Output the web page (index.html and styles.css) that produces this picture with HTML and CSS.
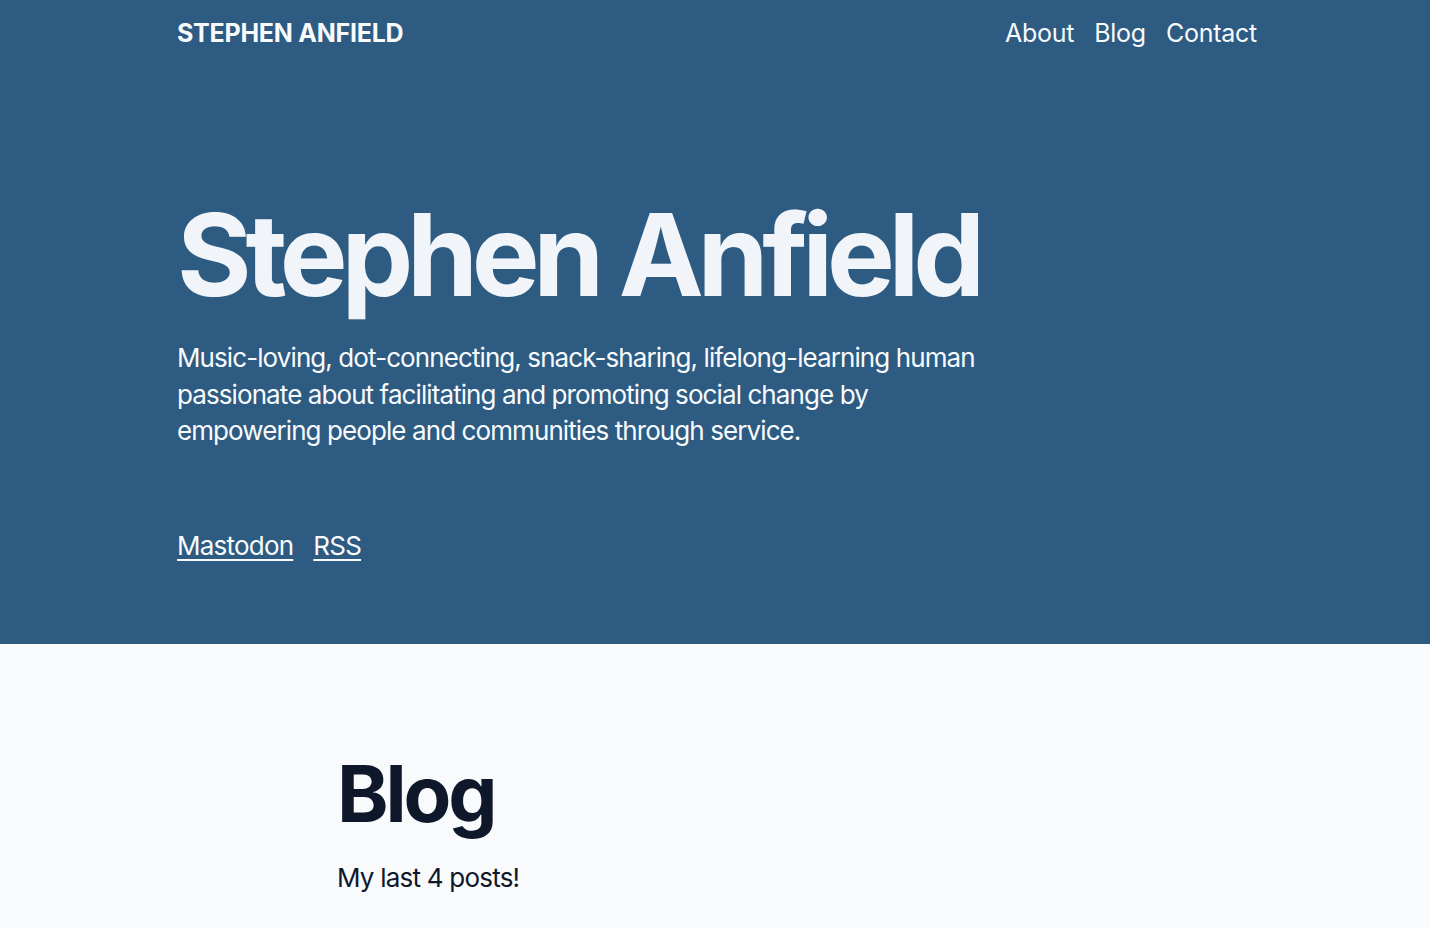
FILE: index.html
```html
<!DOCTYPE html>
<html lang="en">
<head>
<meta charset="utf-8">
<title>Stephen Anfield</title>
<link rel="stylesheet" href="styles.css">
</head>
<body>
<section class="hero">
  <div class="container">
    <header class="site-header">
      <a class="logo" href="#">STEPHEN ANFIELD</a>
      <nav class="nav">
        <a href="#">About</a>
        <a href="#">Blog</a>
        <a href="#">Contact</a>
      </nav>
    </header>
    <div class="intro">
      <h1 class="hero-title">Stephen Anfield</h1>
      <p class="hero-text">Music-loving, dot-connecting, snack-sharing, lifelong-learning human passionate about facilitating and promoting social change by empowering people and communities through service.</p>
      <div class="social">
        <a href="#">Mastodon</a>
        <a href="#">RSS</a>
      </div>
    </div>
  </div>
</section>
<main class="blog">
  <div class="blog-inner">
    <h2 class="blog-title">Blog</h2>
    <p class="blog-sub">My last 4 posts!</p>
  </div>
</main>
</body>
</html>
```

FILE: styles.css
```css
* { box-sizing: border-box; }
html, body { margin: 0; padding: 0; }
body {
  font-family: Inter, "Noto Sans", sans-serif;
  background: #f8fafc;
  color: #0f172a;
}
a { color: inherit; }
.hero {
  background: #2d5b82;
  color: #f8fafc;
  height: 644px;
}
.container {
  max-width: 1084px;
  margin: 0 auto;
  padding-left: 4px;
}
.site-header {
  display: flex;
  justify-content: space-between;
  align-items: center;
  padding-top: 14px;
  height: 51px;
}
.logo {
  font-size: 25px;
  font-weight: 700;
  letter-spacing: -0.01em;
  text-decoration: none;
  line-height: 36px;
}
.nav {
  display: flex;
  gap: 20px;
  font-size: 25px;
  letter-spacing: -0.01em;
  line-height: 36px;
}
.nav a { text-decoration: none; }
.intro { padding-top: 147px; }
.hero-title {
  margin: 0;
  font-size: 114px;
  font-weight: 700;
  letter-spacing: -0.055em;
  line-height: 1;
  color: #f1f5f9;
}
.hero-text {
  margin: 28px 0 0;
  max-width: 810px;
  font-size: 26px;
  letter-spacing: -0.035em;
  line-height: 36.5px;
}
.social {
  display: flex;
  gap: 20px;
  margin-top: 78px;
  font-size: 26px;
  letter-spacing: -0.03em;
  line-height: 36px;
}
.social a {
  text-decoration: underline;
  text-underline-offset: 4px;
  text-decoration-thickness: 2px;
}
.blog-inner {
  max-width: 756px;
  margin: 0 auto;
  padding-top: 100px;
}
.blog-title {
  margin: 0;
  font-size: 78px;
  font-weight: 700;
  letter-spacing: -0.04em;
  line-height: 100px;
  color: #0f172a;
}
.blog-sub {
  margin: 16px 0 0;
  font-size: 26px;
  letter-spacing: -0.03em;
  line-height: 36px;
  color: #0f172a;
}
```
